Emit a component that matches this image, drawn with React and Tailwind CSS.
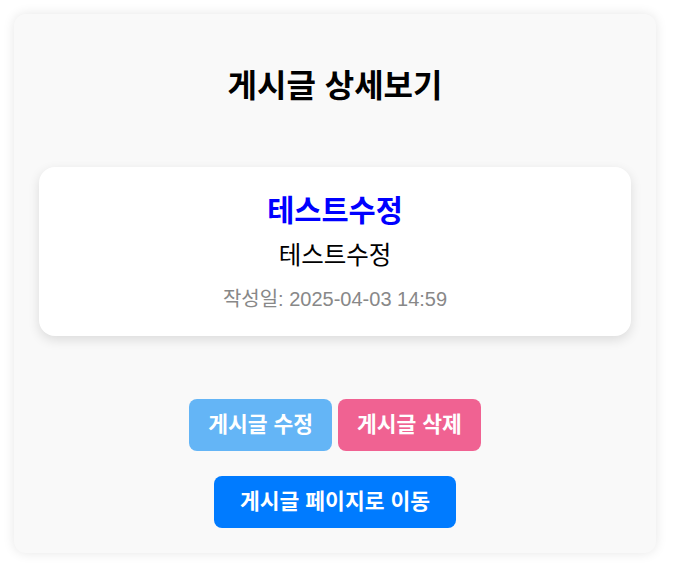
import React from "react";

const App = () => {
  const post = {
    title: "테스트수정",
    content: "테스트수정",
    createdAt: "2025-04-03 14:59",
  };

  return (
    <div className="min-h-[574px] bg-white pt-[14px] pl-[14px] font-['Liberation_Sans','Noto_Sans_CJK_KR',sans-serif]">
      <div className="w-[642px] rounded-[12px] bg-[#f9f9f9] p-[25px] shadow-[0_0_12px_rgba(0,0,0,0.1)] text-center">
        <h1 className="mt-[25px] text-[32px] leading-[45px] font-bold text-black">
          게시글 상세보기
        </h1>

        <div className="mt-[58px] rounded-[16px] bg-white pt-[23px] pb-[22px] px-5 shadow-[0_4px_12px_rgba(0,0,0,0.12)]">
          <h2 className="text-[29.5px] leading-[42px] font-bold text-[#0000ff]">
            {post.title}
          </h2>
          <p className="mt-[7px] text-[24.5px] leading-[33px] text-black">
            {post.content}
          </p>
          <p className="mt-[12px] text-[20px] leading-[30px] text-[#888888]">
            작성일: {post.createdAt}
          </p>
        </div>

        <div className="mt-[63px] flex justify-center gap-[6px]">
          <button className="rounded-[8px] bg-[#64b5f6] px-[19px] py-[11px] text-[21.5px] leading-[30px] font-bold text-white">
            게시글 수정
          </button>
          <button className="rounded-[8px] bg-[#f06292] px-[19px] py-[11px] text-[21.5px] leading-[30px] font-bold text-white">
            게시글 삭제
          </button>
        </div>

        <div className="mt-[25px] flex justify-center">
          <button className="rounded-[8px] bg-[#007bff] px-[26px] py-[11px] text-[21.5px] leading-[30px] font-bold text-white">
            게시글 페이지로 이동
          </button>
        </div>
      </div>
    </div>
  );
};

export default App;
